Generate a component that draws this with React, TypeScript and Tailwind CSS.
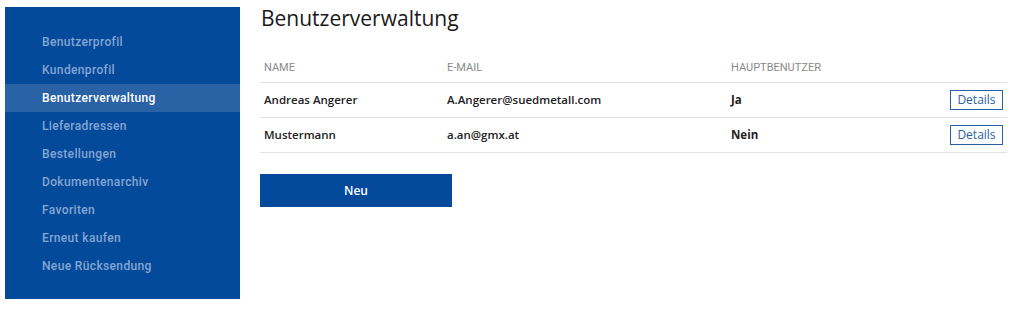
import React from 'react'

const menu = [
  'Benutzerprofil',
  'Kundenprofil',
  'Benutzerverwaltung',
  'Lieferadressen',
  'Bestellungen',
  'Dokumentenarchiv',
  'Favoriten',
  'Erneut kaufen',
  'Neue Rücksendung',
]

const users = [
  { name: 'Andreas Angerer', email: 'A.Angerer@suedmetall.com', main: 'Ja' },
  { name: 'Mustermann', email: 'a.an@gmx.at', main: 'Nein' },
]

const condensed = { fontFamily: "'Roboto', 'Liberation Sans', sans-serif" }
const body = { fontFamily: "'Open Sans', 'Noto Sans', sans-serif" }

export default function App() {
  return (
    <div className="flex items-start w-[1024px] h-[310px] bg-white pl-[5px]">
      {/* Sidebar */}
      <nav className="mt-[7px] w-[235px] h-[292px] bg-[#034a9a] pt-[21px]" style={condensed}>
        {menu.map((item) => {
          const active = item === 'Benutzerverwaltung'
          return (
            <div
              key={item}
              className={`h-[28px] flex items-center pl-[37px] text-[12px] font-medium tracking-[0.03em] ${
                active ? 'bg-[#2a62a6] text-white' : 'text-[#86a5d3]'
              }`}
            >
              {item}
            </div>
          )
        })}
      </nav>

      {/* Main Content */}
      <div className="ml-[20px] w-[747px]" style={body}>
        <h1 className="mt-[5px] h-[28px] flex items-center pl-px text-[21px] font-medium text-[#1a1a1a]">
          Benutzerverwaltung
        </h1>

        <div className="mt-[22px]">
          <div
            className="h-[28px] flex items-center border-b border-[#e2e2e2] text-[11px] uppercase text-[#8a8a8a]"
            style={condensed}
          >
            <div className="w-[187px] pl-[4px]">Name</div>
            <div className="w-[284px]">E-Mail</div>
            <div className="flex-1">Hauptbenutzer</div>
          </div>
          {users.map((u) => (
            <div
              key={u.email}
              className="h-[35px] flex items-center border-b border-[#e2e2e2] text-[11.5px] font-semibold text-[#222]"
            >
              <div className="w-[187px] pl-[4px]">{u.name}</div>
              <div className="w-[284px]">{u.email}</div>
              <div className="flex-1 font-bold">{u.main}</div>
              <button className="mr-[4px] h-[20px] w-[53px] border border-[#2a62a6] text-[12px] font-normal text-[#2a62a6] bg-white">
                Details
              </button>
            </div>
          ))}
        </div>

        <button className="mt-[21px] w-[192px] h-[33px] bg-[#034a9a] text-white text-[12px] font-semibold">
          Neu
        </button>
      </div>
    </div>
  )
}
